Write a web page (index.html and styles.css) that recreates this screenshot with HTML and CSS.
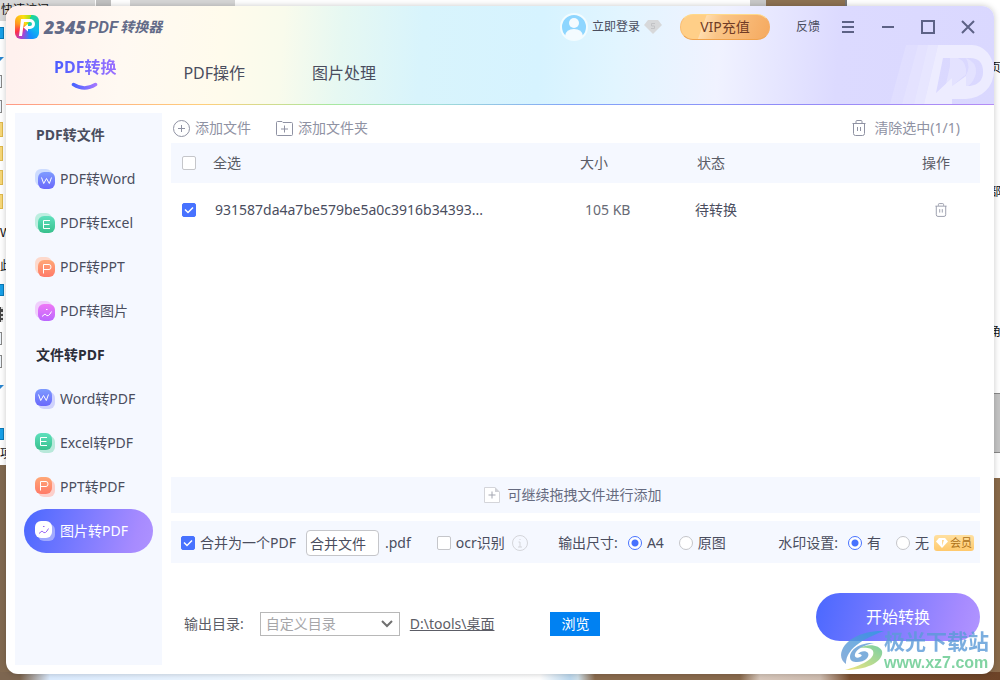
FILE: index.html
```html
<!DOCTYPE html>
<html lang="zh-CN">
<head>
<meta charset="utf-8">
<meta name="viewport" content="width=device-width, initial-scale=1">
<title>2345PDF转换器</title>
<link rel="stylesheet" href="styles.css">
</head>
<body>
<svg class="defs" aria-hidden="true">
  <defs>
    <linearGradient id="blue" x1="0" y1="0" x2="0" y2="1"><stop offset="0" stop-color="#7e9bff"/><stop offset="1" stop-color="#6a68fb"/></linearGradient>
    <linearGradient id="green" x1="0" y1="0" x2="0" y2="1"><stop offset="0" stop-color="#5fe0bd"/><stop offset="1" stop-color="#38c08d"/></linearGradient>
    <linearGradient id="orange" x1="0" y1="0" x2="0" y2="1"><stop offset="0" stop-color="#ffa877"/><stop offset="1" stop-color="#ff7a68"/></linearGradient>
    <linearGradient id="pink" x1="0" y1="0" x2="0" y2="1"><stop offset="0" stop-color="#ee78f5"/><stop offset="1" stop-color="#bb66ff"/></linearGradient>
    <linearGradient id="smile" x1="0" y1="0" x2="1" y2="0"><stop offset="0" stop-color="#4a63ff"/><stop offset="1" stop-color="#a276ff"/></linearGradient>
    <linearGradient id="swirl-blue" x1="0" y1="1" x2="1" y2="0"><stop offset="0" stop-color="#6f9bd2"/><stop offset="1" stop-color="#2f9be0"/></linearGradient>
    <linearGradient id="swirl-green" x1="0" y1="1" x2="1" y2="0"><stop offset="0" stop-color="#f0e060"/><stop offset="1" stop-color="#58c48c"/></linearGradient>
    <symbol id="glyph-w" viewBox="0 0 17 17"><path d="M3.500 5.500l2.200 6 2.800-5 2.800 5 2.200-6"/></symbol>
    <symbol id="glyph-e" viewBox="0 0 17 17"><path d="M12 4.500H5.500v8H12M5.500 8.500h6"/></symbol>
    <symbol id="glyph-p" viewBox="0 0 17 17"><path d="M5.500 13.500V4.500h5.500q2 0 2 2.500t-2 2.500H5.500"/></symbol>
    <symbol id="glyph-i" viewBox="0 0 17 17"><path d="M4 12.500l3-2.500q2 2.500 3.500 1.500t3-4M8 5.500h1.500"/></symbol>
    <symbol id="trash" viewBox="0 0 14 16"><path d="M.5 3.500h13M4 3V1.500Q4 .5 5 .5h4q1 0 1 1V3M1.500 3.500v10q0 2 2 2h7q2 0 2-2v-10M5.500 7v4M8.500 7v4"/></symbol>
  </defs>
</svg>

<div class="desktop" aria-hidden="true">
  <div class="explorer">
    <span class="explorer-title">快速访问</span>
    <i class="bit film" style="top:27px"></i><i class="bit arrow" style="top:57px"></i>
    <i class="bit page" style="top:75px"></i><i class="bit page" style="top:100px"></i>
    <i class="bit folder" style="top:122px"></i><i class="bit folder" style="top:146px"></i>
    <i class="bit folder" style="top:170px"></i><i class="bit folder" style="top:194px"></i>
    <span class="bit" style="top:225px">W</span><span class="bit" style="top:258px">此</span>
    <i class="bit film" style="top:284px"></i><i class="bit reel" style="top:307px"></i>
    <i class="bit page" style="top:332px"></i><i class="bit page" style="top:355px"></i>
    <i class="bit arrow" style="top:385px"></i><i class="bit film" style="top:428px"></i>
    <span class="bit" style="top:446px">项</span>
  </div>
  <div class="document">
    <span class="bit" style="top:60px">页</span><span class="bit" style="top:184px">部</span>
    <span class="bit" style="top:202px">、</span><span class="bit" style="top:324px">角</span>
    <i class="scroll"></i>
  </div>
</div>

<div class="app">
  <header class="header">
    <svg class="header-mark" viewBox="0 0 104 60" aria-hidden="true">
      <g fill="#fff">
        <path opacity=".15" d="M16 1h12L12 60H0z"/><path opacity=".25" d="M28 1h10L24 60H12z"/><path opacity=".35" d="M38 1h10L34 60H24z"/>
        <path opacity=".5" fill-rule="evenodd" d="M48 1h34a22 26 0 0 1 22 26 28 28 0 0 1-28 28H62v5H34zM53 14l-7 35 16-15v8l14-10v10h4q13-2 13-14 0-14-13-14z"/>
        <path opacity=".25" d="M60 14h8q9 4 8 16l-2 3V32L62 42V34l-6 6 4-18zM76 14q11 4 10 15-2 9-8 13h-2V31q5-8 0-17z"/>
      </g>
    </svg>
    <div class="titlebar">
      <svg class="logo" viewBox="0 0 24 24" aria-hidden="true"><foreignObject width="24" height="24"><div class="logo-tile"></div></foreignObject><path d="M6 4h9a5 5 0 0 1 0 10h-2v2.500L8.500 12.500 13 9v2h2a2 2 0 0 0 0-4H9L7 21H4z" fill="#fff"/></svg>
      <h1 class="brand"><span class="brand-num">2345</span><span class="brand-pdf">PDF</span><span class="brand-cn">转换器</span></h1>
      <button class="login" type="button">
        <svg class="avatar" viewBox="0 0 28 28" aria-hidden="true"><circle cx="14" cy="14" r="13" fill="#8ed6ff" stroke="#f2fcff" stroke-width="2"/><circle cx="14" cy="10" r="5" fill="#f4fbff"/><path d="M5 23q1-7 9-7t9 7q-4 4-9 4t-9-4z" fill="#f4fbff"/></svg>
        <span>立即登录</span>
        <svg class="gem" viewBox="0 0 18 14" aria-hidden="true"><path d="M4 0h10l4 5-9 9-9-9z" fill="#d7d8da"/><path d="M11 3.500H7.500V6h3v2.500H7" fill="none" stroke="#c2c3c6"/></svg>
      </button>
      <button class="vip" type="button">VIP充值</button>
      <button class="feedback" type="button">反馈</button>
      <div class="controls">
        <button type="button" aria-label="菜单"><svg viewBox="0 0 14 14"><path d="M1 2h12M1 7h12M1 12h12"/></svg></button>
        <button type="button" aria-label="最小化"><svg viewBox="0 0 14 14"><path d="M1 7h12"/></svg></button>
        <button type="button" aria-label="最大化"><svg viewBox="0 0 14 14"><path d="M1 1h12v12H1z"/></svg></button>
        <button type="button" aria-label="关闭"><svg viewBox="0 0 14 14"><path d="M1 1l12 12M13 1L1 13"/></svg></button>
      </div>
    </div>
    <nav class="tabs">
      <a class="tab tab-active" href="#"><span>PDF转换</span><svg viewBox="0 0 28 9" aria-hidden="true"><path d="M2.500 2.500q11 7 22 0" fill="none" stroke="url(#smile)" stroke-width="3.500" stroke-linecap="round"/></svg></a>
      <a class="tab" href="#">PDF操作</a>
      <a class="tab" href="#">图片处理</a>
    </nav>
  </header>

  <div class="body">
    <nav class="sidebar">
      <h2>PDF转文件</h2>
      <a class="item" href="#"><svg class="ico" viewBox="0 0 20 20"><rect width="17" height="17" rx="6" fill="#cddcff"/><rect x="3" y="3" width="17" height="17" rx="6" fill="url(#blue)"/><use href="#glyph-w" x="3" y="3" width="17" height="17"/></svg>PDF转Word</a>
      <a class="item" href="#"><svg class="ico" viewBox="0 0 20 20"><rect width="17" height="17" rx="6" fill="#bdeee0"/><rect x="3" y="3" width="17" height="17" rx="6" fill="url(#green)"/><use href="#glyph-e" x="3" y="3" width="17" height="17"/></svg>PDF转Excel</a>
      <a class="item" href="#"><svg class="ico" viewBox="0 0 20 20"><rect width="17" height="17" rx="6" fill="#fdd9cc"/><rect x="3" y="3" width="17" height="17" rx="6" fill="url(#orange)"/><use href="#glyph-p" x="3" y="3" width="17" height="17"/></svg>PDF转PPT</a>
      <a class="item" href="#"><svg class="ico" viewBox="0 0 20 20"><rect width="17" height="17" rx="6" fill="#f0cffc"/><rect x="3" y="3" width="17" height="17" rx="6" fill="url(#pink)"/><use href="#glyph-i" x="3" y="3" width="17" height="17"/></svg>PDF转图片</a>
      <h2 class="dark">文件转PDF</h2>
      <a class="item" href="#"><svg class="ico" viewBox="0 0 20 20"><rect x="3" y="3" width="17" height="17" rx="6" fill="#cfd2fd"/><rect width="17" height="17" rx="6" fill="url(#blue)"/><use href="#glyph-w" width="17" height="17"/></svg>Word转PDF</a>
      <a class="item" href="#"><svg class="ico" viewBox="0 0 20 20"><rect x="3" y="3" width="17" height="17" rx="6" fill="#b8e8da"/><rect width="17" height="17" rx="6" fill="url(#green)"/><use href="#glyph-e" width="17" height="17"/></svg>Excel转PDF</a>
      <a class="item" href="#"><svg class="ico" viewBox="0 0 20 20"><rect x="3" y="3" width="17" height="17" rx="6" fill="#fccfcb"/><rect width="17" height="17" rx="6" fill="url(#orange)"/><use href="#glyph-p" width="17" height="17"/></svg>PPT转PDF</a>
      <a class="item item-active" href="#"><svg class="ico" viewBox="0 0 20 20"><rect x="3" y="3" width="17" height="17" rx="6" fill="#fff" opacity=".4"/><rect width="17" height="17" rx="6" fill="#fff"/><use href="#glyph-i" width="17" height="17"/></svg>图片转PDF</a>
    </nav>

    <main class="main">
      <div class="toolbar">
        <button type="button"><svg width="17" height="17" viewBox="0 0 17 17"><circle cx="8.500" cy="8.500" r="8"/><path d="M8.500 5v7M5 8.500h7"/></svg>添加文件</button>
        <button type="button"><svg width="17" height="15" viewBox="0 0 17 15"><path d="M.5 1.500q0-1 1-1H6l1 1h8.500q1 0 1 1v11q0 1-1 1h-14q-1 0-1-1zM8.500 4.500v7M5 8h7"/></svg>添加文件夹</button>
        <button class="clear" type="button"><svg width="14" height="16"><use href="#trash"/></svg>清除选中(1/1)</button>
      </div>

      <table class="files">
        <colgroup><col class="c-check"><col><col class="c-size"><col class="c-state"><col class="c-act"></colgroup>
        <thead><tr><th><input type="checkbox" id="all" aria-label="全选"></th><th><label for="all">全选</label></th><th>大小</th><th>状态</th><th class="act">操作</th></tr></thead>
        <tbody><tr><td><input type="checkbox" checked aria-label="选择文件"></td><td class="name">931587da4a7be579be5a0c3916b34393...</td><td class="size">105 KB</td><td class="state">待转换</td><td class="act"><button type="button" aria-label="删除"><svg width="12" height="14"><use href="#trash"/></svg></button></td></tr></tbody>
      </table>

      <div class="drop"><svg width="16" height="16" viewBox="0 0 16 16"><path d="M11 .5H.5v15h15V5" fill="#fff" stroke="#d4d5da"/><path d="M11 0l5 5h-5z" fill="#d0d1d6"/><path d="M8 4.500v7M4.500 8h7" stroke="#a3a6b1" fill="none"/></svg>可继续拖拽文件进行添加</div>

      <form class="options">
        <div class="group">
          <input type="checkbox" id="merge" checked><label for="merge">合并为一个PDF</label>
          <input class="filename" type="text" value="合并文件" aria-label="文件名"><span>.pdf</span>
          <input class="ocr" type="checkbox" id="ocr"><label for="ocr">ocr识别</label>
          <svg class="info" viewBox="0 0 16 16" aria-hidden="true"><circle cx="8" cy="8" r="7.500"/><path d="M6.500 7H8v5M6 12h4M7.500 4.500h1"/></svg>
        </div>
        <div class="group group-size">
          <span class="legend">输出尺寸:</span>
          <input type="radio" name="dim" id="a4" checked><label class="spaced" for="a4">A4</label>
          <input type="radio" name="dim" id="orig"><label for="orig">原图</label>
        </div>
        <div class="group">
          <span class="legend">水印设置:</span>
          <input type="radio" name="mark" id="yes" checked><label class="spaced" for="yes">有</label>
          <input type="radio" name="mark" id="no"><label for="no">无</label>
          <span class="member"><svg width="12" height="10" viewBox="0 0 12 10"><path d="M3 0h6l3 3.500L6 10 0 3.500z" fill="#fff"/><path d="M6 2h2L6 8z" fill="#ffd894"/></svg>会员</span>
        </div>
      </form>

      <div class="output">
        <label for="dir">输出目录:</label>
        <select id="dir"><option>自定义目录</option></select>
        <a class="path" href="#">D:\tools\桌面</a>
        <button class="browse" type="button">浏览</button>
        <button class="start" type="button">开始转换</button>
      </div>
    </main>
  </div>
</div>

<div class="site-mark">
  <svg viewBox="0 0 44 42" aria-hidden="true">
    <path d="M44 1C23 0 2 10 1 25c0 4 2 7 5 9 0-11 8-22 38-33z" fill="url(#swirl-blue)"/>
    <path d="M34 13c-13-1-24 6-24 14 0 4 3 5 7 5 8 0 13-5 11-9-2-3-8-2-10 1 4 0 5 2 2 3-3 2-6 0-5-3 1-5 10-9 19-11z" fill="#5f9bd4"/>
    <path d="M20 18c8-5 20-3 22 3 2 9-12 19-37 19 15-4 31-11 28-19-1-3-7-4-13-3z" fill="url(#swirl-green)"/>
  </svg>
  <div><strong>极光下载站</strong><span>www.xz7.com</span></div>
</div>
</body>
</html>
```

FILE: styles.css
```css
* { box-sizing: border-box; }

body {
  margin: 0;
  min-height: 100vh;
  padding: 6px;
  display: flex;
  position: relative;
  overflow: hidden;
  font: 14px/20px "Noto Sans", "Noto Sans CJK SC", sans-serif;
  color: #4a4d5e;
  background: linear-gradient(90deg, #806850, #8d7252 20px, #8d7252 96%, #8a6a4a);
}

button, input, select { font: inherit; color: inherit; margin: 0; }
button { border: 0; padding: 0; background: none; display: flex; align-items: center; cursor: pointer; }
a { color: inherit; text-decoration: none; }
h1, h2 { margin: 0; }
.defs { position: absolute; width: 0; height: 0; }

/* Desktop behind the application window */
.desktop {
  position: absolute;
  inset: 0;
  overflow: hidden;
  font: 12px/16px "Liberation Sans", "Noto Sans CJK SC", sans-serif;
  color: #111;
  background: linear-gradient(90deg, #7d6650 20px, #dcecff 50px, #f4faff 300px, #fff 540px, #bcd8ee 570px, #cfdfe8 578px, #8a6b4e 595px, #8a6b4e 740px, #d8c8bc 760px, #cfbdb0 820px, #7a4f30 850px, #6d4428) bottom / 100% 8px no-repeat;
}
.explorer { position: absolute; left: 0; top: 0; width: 766px; height: 465px; background: linear-gradient(90deg, #d9d9d9 95px, #fff 95px 96px, #c2c2c2 96px 111px, #fff 111px 130px, #d6d6d6 130px 235px, #fff 235px 750px, #c9c9c9 750px) top / 100% 21px no-repeat #fff; }
.explorer-title { position: absolute; left: 1px; top: 2px; }
.document { position: absolute; right: 0; top: 0; width: 155px; height: 478px; background: #fff; border-left: 2px solid #777; }
.document .bit { left: 142px; }
.bit { position: absolute; left: 0; }
.film { left: -8px; width: 12px; height: 12px; background: #18a0e8; border: 1px solid #0a7ab8; }
.arrow { left: -4px; border: 4px solid transparent; border-top-color: #2a86d0; }
.page { left: -8px; width: 10px; height: 13px; border: 1px solid #888; background: #eef5fb; }
.folder { left: -6px; width: 9px; height: 15px; background: #f7d777; border: 1px solid #dfb94c; }
.reel { left: -4px; width: 7px; height: 15px; background: #444; border-right: 2px dotted #ddd; }
.scroll { position: absolute; right: 0; top: 393px; width: 7px; height: 60px; background: #c4c4c4; border: solid #888; border-width: 1px 0; }

.app {
  position: relative;
  flex: 1;
  display: flex;
  flex-direction: column;
  overflow: hidden;
  border-radius: 12px;
  background: #fff;
  box-shadow: 0 0 6px rgba(0, 0, 0, .22);
}

/* Header */
.header {
  position: relative;
  flex: none;
  padding-bottom: 1px;
  background:
    linear-gradient(90deg, #ff9a86, #ffcf7c 20%, #a8e8a0 33%, #9fdcd8 44%, #82a5f8 57%, #8f8cf8 78%, #b48cf5) bottom / 100% 1px no-repeat,
    linear-gradient(94deg, #fff1ee 1%, #fff9f2 12%, #fffbec 22%, #f9fbec 28%, #e6f8f2 34%, #d8f4fc 42%, #d6f3ff 54%, #e2f5ff 62%, #f0f2ff 72%, #dcdaff 84%, #dad8ff);
}
.header-mark { position: absolute; right: 0; bottom: 1px; width: 104px; height: 60px; }
.titlebar { display: flex; align-items: center; height: 42px; padding: 0 19px 0 9px; position: relative; }
.logo { width: 24px; height: 24px; }
.logo-tile { width: 24px; height: 24px; border-radius: 6px; background: conic-gradient(from 20deg, #20d890, #12b8f0 90deg, #168cff 140deg, #b040d0 190deg, #ff3048 225deg, #ff9a20 270deg, #ffdf10 320deg, #9be020); }
.brand { display: flex; align-items: center; flex: 1; padding-left: 5px; color: #626a88; font-style: italic; font-size: 14px; line-height: 20px; }
.brand-num { font: italic 900 18px/20px "Open Sans", sans-serif; }
.brand-pdf { font: italic 600 17px/20px Roboto, sans-serif; padding: 0 2px; }
.login { gap: 4px; font-size: 12px; }
.avatar { width: 28px; height: 28px; }
.gem { width: 18px; height: 14px; }
.vip {
  width: 90px; height: 26px; margin-left: 18px; justify-content: center; border-radius: 13px; color: #713c26;
  background: linear-gradient(110deg, #ffcf88 26%, #ffdcae 27%, #fac587 44%, #f5a95f);
  border: 1px solid; border-color: #ffd98a #f5ad63 #f0a24c #f9bd72;
}
.feedback { margin-left: 26px; font-size: 12px; }
.controls { display: flex; gap: 26px; margin-left: 21px; }
.controls svg { width: 14px; height: 14px; fill: none; stroke: #5d6286; stroke-width: 2; }
.tabs { position: relative; display: flex; gap: 67px; height: 56px; padding: 7px 0 0 48px; font-size: 16px; line-height: 24px; }
.tab { display: flex; flex-direction: column; align-items: center; padding-top: 6px; }
.tab-active { padding-top: 0; font-weight: 700; }
.tab-active span { background: linear-gradient(90deg, #4a5cff, #9a70ff); background-clip: text; color: transparent; }
.tab-active svg { width: 28px; height: 9px; margin-top: 3px; }

.body { flex: 1; display: flex; gap: 9px; padding: 8px 14px 9px 9px; }

/* Sidebar */
.sidebar { flex: none; width: 147px; padding: 0 9px; background: #f5f8ff; }
.sidebar h2 { font-size: 14px; line-height: 44px; padding-left: 12px; }
.sidebar .dark { color: #2b2d38; }
.item { display: flex; align-items: center; gap: 5px; height: 44px; padding-left: 11px; border-radius: 22px; }
.ico { width: 20px; height: 20px; fill: none; stroke: #fff; stroke-width: 1; }
.ico rect { stroke: none; }
.item-active { color: #fff; background: linear-gradient(105deg, #4a68ff, #a78bff 85%, #ae92ff); }
.item-active .ico { stroke: #9a66f5; }

/* Content */
.main { flex: 1; min-width: 0; display: flex; flex-direction: column; }
.toolbar { display: flex; gap: 25px; height: 30px; padding: 0 20px 0 2px; color: #8f92a3; }
.toolbar button { gap: 5px; }
.toolbar .clear { margin-left: auto; gap: 8px; }
.toolbar svg, .files svg { fill: none; stroke: #8f92a3; }

.files { width: 100%; table-layout: fixed; border-collapse: collapse; text-align: left; }
.files th { height: 40px; padding: 0; font-weight: 400; background: #f5f8ff; color: #5a5c66; }
.files td { height: 54px; padding: 0; }
.c-check { width: 42px; }
.c-size { width: 115px; }
.c-state { width: 195px; }
.c-act { width: 90px; }
.files input { display: block; margin-left: 11px; }
.files th:nth-child(4) { padding-left: 2px; }
.files .name { padding-left: 2px; }
.files .size { padding-left: 5px; color: #686a75; }
.files th.act { padding-left: 32px; }
.files td.act { padding-left: 45px; }

input[type="checkbox"], input[type="radio"] { appearance: none; flex: none; width: 14px; height: 14px; border: 1px solid #c5c6ca; border-radius: 2px; background: #fff; }
input[type="checkbox"]:checked {
  border-color: #4772ff;
  background: #4772ff url("data:image/svg+xml,%3Csvg xmlns='http://www.w3.org/2000/svg' viewBox='0 0 12 12'%3E%3Cpath d='M2 5.500l3 3L10 3.500' fill='none' stroke='white' stroke-width='1.500'/%3E%3C/svg%3E") center / 12px no-repeat;
}
input[type="radio"] { border-radius: 50%; }
input[type="radio"]:checked { border-color: #4772ff; background: radial-gradient(circle, #4772ff 3px, #fff 4px); }

.drop { display: flex; align-items: center; justify-content: center; gap: 8px; height: 36px; margin-top: auto; padding-right: 6px; background: #f5f8ff; color: #666b80; }
.options { display: flex; align-items: center; justify-content: space-between; height: 42px; margin-top: 8px; padding: 1px 6px 0 10px; background: #f5f8ff; }
.group { display: flex; align-items: center; gap: 5px; white-space: nowrap; }
.group-size { margin-right: 22px; }
.filename { width: 73px; height: 26px; margin: 0 1px 0 5px; padding: 0 3px; border: 1px solid #c5c6ca; border-radius: 4px; background: #fff; }
.ocr { margin-left: 21px; }
.info { width: 16px; height: 16px; margin-left: 2px; fill: none; stroke: #d4d5da; }
.legend { margin-right: 5px; }
.spaced { margin-right: 10px; }
.member { display: flex; align-items: center; gap: 2px; height: 16px; padding: 0 2px; border-radius: 3px; background: linear-gradient(#ffe0a0, #ffc96c); color: #ad7017; font-size: 11px; line-height: 16px; }

.output { display: flex; align-items: center; height: 48px; margin: 30px 0 24px; padding-left: 13px; }
.output > label, .output select, .path, .browse { margin-top: 14px; }
.output > label { color: #5c5d66; }
.output select {
  appearance: none; width: 140px; height: 24px; margin-left: 16px; padding: 0 5px; border: 1px solid #b8b8b8; border-radius: 0; color: #a6a6a9;
  background: #fff url("data:image/svg+xml,%3Csvg xmlns='http://www.w3.org/2000/svg' viewBox='0 0 12 8'%3E%3Cpath d='M1 1l5 5 5-5' fill='none' stroke='%23707070' stroke-width='2'/%3E%3C/svg%3E") right 6px center / 12px 8px no-repeat;
}
.path { margin-left: 10px; color: #5c5d66; text-decoration: underline; }
.browse { width: 50px; height: 24px; margin-left: 56px; justify-content: center; background: #0081f2; color: #fff; }
.start { width: 164px; height: 48px; margin-left: auto; justify-content: center; border-radius: 24px; color: #fff; font-size: 16px; background: linear-gradient(105deg, #4a68ff, #a78bff 85%, #b195ff); }

/* Site stamp over the window corner */
.site-mark { position: absolute; right: 11px; bottom: 8px; display: flex; align-items: flex-end; opacity: .8; pointer-events: none; }
.site-mark svg { width: 44px; height: 42px; }
.site-mark div { display: flex; flex-direction: column; }
.site-mark strong { font-size: 21px; line-height: 25px; color: #5b9bd8; }
.site-mark span { font: 700 16px/18px "Liberation Sans", sans-serif; color: #62c98c; }
```
